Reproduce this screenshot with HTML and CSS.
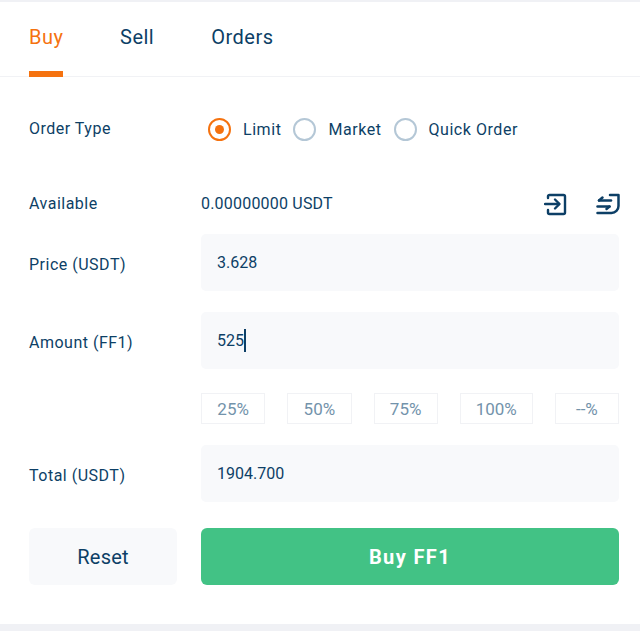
FILE: index.html
```html
<!DOCTYPE html>
<html lang="en">
<head>
<meta charset="utf-8">
<title>Buy FF1</title>
<link rel="stylesheet" href="styles.css">
</head>
<body>
<main class="panel">
  <nav class="tabs">
    <a class="tab tab-active">Buy</a>
    <a class="tab">Sell</a>
    <a class="tab">Orders</a>
  </nav>
  <section class="form">
    <div class="row row-type">
      <span class="label">Order Type</span>
      <div class="radios">
        <span class="radio radio-on"><i class="dot"></i></span><span class="radio-text">Limit</span>
        <span class="radio"></span><span class="radio-text">Market</span>
        <span class="radio"></span><span class="radio-text">Quick Order</span>
      </div>
    </div>
    <div class="row row-avail">
      <span class="label">Available</span>
      <span class="avail-value">0.00000000 USDT</span>
      <span class="icons">
        <svg class="icon" viewBox="0 0 24 24" fill="none" stroke="#0d3f66" stroke-width="2.4" stroke-linecap="round" stroke-linejoin="round"><path d="M4 6V4.500A1.500 1.500 0 0 1 5.500 3h14A1.500 1.500 0 0 1 21 4.500v16a1.500 1.500 0 0 1-1.500 1.500h-14A1.500 1.500 0 0 1 4 20.500V18"/><path d="M1 12h14"/><path d="M11 7.500l4.500 4.500-4.500 4.500"/></svg>
        <svg class="icon" viewBox="0 0 24 24" fill="none" stroke="#0d3f66" stroke-width="2.500" stroke-linecap="round" stroke-linejoin="round"><path d="M14 3h8.500v11a7 7 0 0 1-7 7H1.500"/><path d="M3 8.500h12"/><path d="M6.500 5.500L3 8.500"/><path d="M1.500 14.500h12"/><path d="M13.500 14.500l-3 2.500"/></svg>
      </span>
    </div>
    <div class="row row-field">
      <span class="label">Price (USDT)</span>
      <div class="field">3.628</div>
    </div>
    <div class="row row-field">
      <span class="label">Amount (FF1)</span>
      <div class="field">525<i class="caret"></i></div>
    </div>
    <div class="percents">
      <span class="pct">25%</span>
      <span class="pct">50%</span>
      <span class="pct">75%</span>
      <span class="pct pct-wide">100%</span>
      <span class="pct">--%</span>
    </div>
    <div class="row row-field">
      <span class="label">Total (USDT)</span>
      <div class="field">1904.700</div>
    </div>
    <div class="actions">
      <button class="btn btn-reset">Reset</button>
      <button class="btn btn-buy">Buy FF1</button>
    </div>
  </section>
</main>
</body>
</html>
```
FILE: styles.css
```css
* { box-sizing: border-box; }
html, body { margin: 0; padding: 0; background: #fff; }
body { width: 640px; height: 632px; overflow: hidden; font-family: Roboto, "Liberation Sans", sans-serif; color: #0d3f66; }
.panel {
  height: 631px;
  border-top: 2px solid #f0f1f5;
  border-bottom: 7px solid #f0f1f5;
}
.tabs {
  display: flex;
  gap: 57px;
  height: 75px;
  padding-left: 29px;
  border-bottom: 1px solid #f1f2f5;
}
.tab {
  height: 75px;
  padding-top: 22px;
  font-size: 20px;
  line-height: 26px;
  letter-spacing: 0.5px;
  border-bottom: 6px solid transparent;
  margin-bottom: -1px;
}
.tab-active { color: #f5720f; border-bottom-color: #f5720f; width: 34px; white-space: nowrap; }
.form { padding: 0 21px 0 29px; }
.row { display: flex; align-items: center; }
.label { width: 172px; flex: none; font-size: 16px; letter-spacing: 0.5px; }
.row-type { height: 50px; margin-top: 27px; }
.row-type .label { padding-bottom: 2px; }
.radios { display: flex; align-items: center; padding-left: 7px; }
.radio {
  width: 23px; height: 23px; flex: none;
  border: 2px solid #b4c7d6; border-radius: 50%;
  display: flex; align-items: center; justify-content: center;
}
.radio-on { border-color: #f5720f; }
.dot { width: 9px; height: 9px; border-radius: 50%; background: #f5720f; }
.radio-text { margin: 0 12px; font-size: 16px; letter-spacing: 0.55px; }
.row-avail { height: 50px; margin-top: 24px; }
.avail-value { font-size: 16px; letter-spacing: 0.2px; }
.icons { margin-left: auto; margin-right: -1px; margin-top: 2px; display: flex; gap: 28px; }
.icon { width: 24px; height: 24px; display: block; }
.row-field { margin-top: 21px; }
.row-field .label { padding-top: 3px; }
.row-avail + .row-field { margin-top: 6px; }
.field {
  flex: 1;
  height: 57px;
  background: #f8f9fb;
  border-radius: 5px;
  padding-left: 16px;
  padding-bottom: 1px;
  display: flex;
  align-items: center;
  font-size: 16px;
}
.caret { width: 2px; height: 23px; background: #0d3f66; }
.percents {
  display: flex;
  gap: 22px;
  margin: 24px 0 21px 172px;
}
.pct {
  flex: 1 1 64px;
  height: 31px;
  border: 1px solid #f1f2f5;
  color: #7393ab;
  font-size: 17px;
  display: flex;
  align-items: center;
  justify-content: center;
}
.pct-wide { flex: none; width: 73px; }
.percents + .row-field { margin-top: 0; }
.actions { display: flex; gap: 24px; margin-top: 26px; }
.btn {
  height: 57px;
  border: none;
  border-radius: 6px;
  font-family: inherit;
  font-size: 20px;
  padding: 0;
}
.btn-reset { width: 148px; background: #f8f9fb; color: #0d3f66; letter-spacing: 0.2px; }
.btn-buy { flex: 1; background: #42c285; color: #fff; font-weight: 700; letter-spacing: 1.4px; }
```
